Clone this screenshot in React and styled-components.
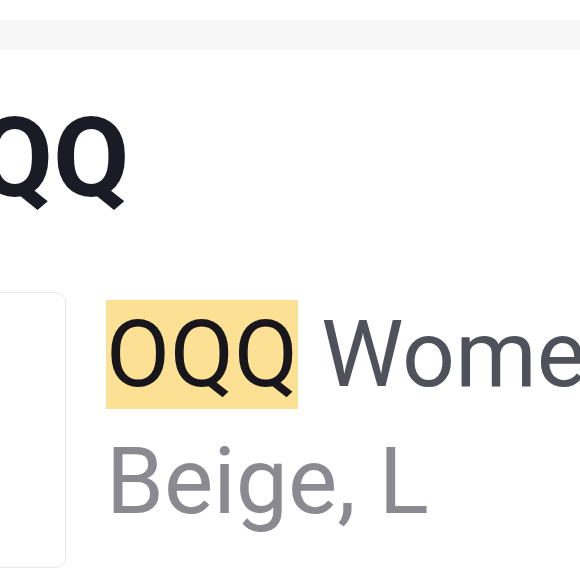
import styled, { createGlobalStyle } from "styled-components"

const GlobalStyle = createGlobalStyle`
  html, body {
    margin: 0;
    padding: 0;
    background: #ffffff;
    overflow: hidden;
  }
  body {
    font-family: Roboto, "Liberation Sans", sans-serif;
  }
`

const Page = styled.div`
  width: 580px;
  height: 580px;
  overflow: hidden;
  padding-top: 20px;
  box-sizing: border-box;
`

const SearchStrip = styled.div`
  height: 30px;
  background: #f7f7f7;
`

const Heading = styled.h1`
  margin: 43px 0 0 -100px;
  font-family: Roboto, "Liberation Sans", sans-serif;
  font-weight: 700;
  font-size: 111px;
  line-height: 131px;
  color: #1b1b25;
  white-space: nowrap;
`

const ProductRow = styled.div`
  display: flex;
  align-items: flex-start;
  gap: 40px;
  margin-top: 68px;
`

const Thumb = styled.div`
  flex: none;
  width: 260px;
  height: 276px;
  margin-left: -194px;
  border: 1.5px solid #eaeaed;
  border-radius: 10px;
  background: #ffffff;
  box-sizing: border-box;
`

const Info = styled.div`
  display: flex;
  flex-direction: column;
  min-width: 0;
  margin-top: -1px;
  font-size: 93px;
  line-height: 127px;
  white-space: nowrap;
`

const Title = styled.div`
  color: #4f525a;
`

const Match = styled.mark`
  background: #fce194;
  color: #16161c;
`

const Variant = styled.div`
  color: #8a8a90;
`

export default function App() {
  return (
    <Page>
      <GlobalStyle />
      <SearchStrip />
      <Heading>OQQ</Heading>
      <ProductRow>
        <Thumb />
        <Info>
          <Title>
            <Match>OQQ</Match> Women's Ribbed Tank
          </Title>
          <Variant>Beige, L</Variant>
        </Info>
      </ProductRow>
    </Page>
  )
}
